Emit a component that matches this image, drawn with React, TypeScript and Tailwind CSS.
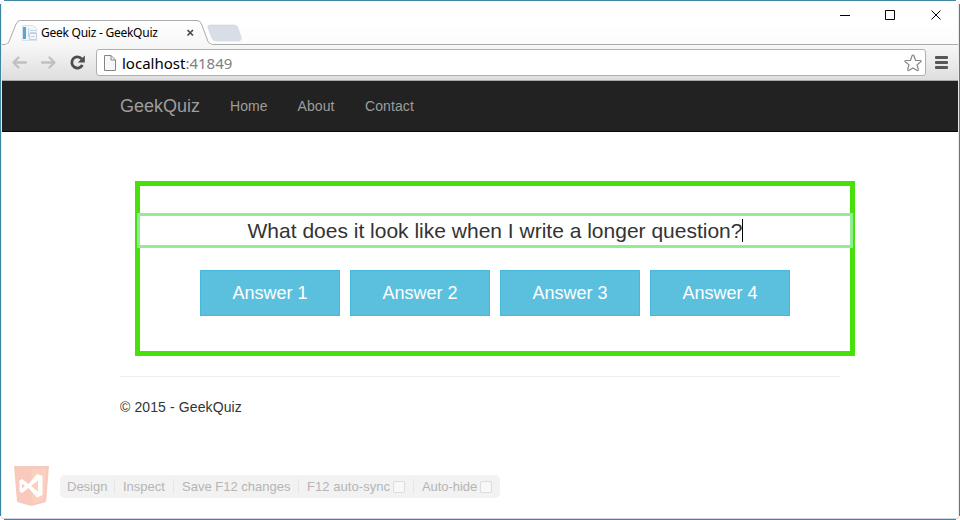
import React from "react";

function TabStrip() {
  return (
    <div className="flex h-11 shrink-0 justify-between bg-gradient-to-b from-white from-50% to-[#fbfbfb]">
      <div className="relative mt-[18px] h-[26px] w-[250px]">
        <svg className="absolute inset-0" width="250" height="26" viewBox="0 0 250 26" fill="none">
          <defs>
            <linearGradient id="tab" x1="0" y1="0" x2="0" y2="1">
              <stop offset="0" stopColor="#fff" />
              <stop offset="1" stopColor="#f7f7f7" />
            </linearGradient>
          </defs>
          <path d="M0 25.5H3Q6 25.5 7 22.5L14 5Q15.5 1.5 18.5 1.5H195Q198 1.5 199.500 5L206 22.500Q207.500 25.500 210.500 25.500H250" fill="url(#tab)" stroke="#ababab" />
          <path d="M4 25.5H209" stroke="#f7f7f7" />
          <path d="M208 6h24q3 0 4 3l3 9q1 4-3 4h-21q-4 0-5-3l-4-10q-1-3 2-3z" fill="#d8dee7" stroke="#d0d3d8" strokeWidth=".6" />
          <path d="M20.500 6.500h11l3 3V21.500h-14z" fill="#f1f6fb" stroke="#d9e1e9" />
          <path d="M21 8h3v12h-3z" fill="#5ba5d6" />
          <path d="M26.500 9v9M28 11.500h6M28 13.500h6" stroke="#c5d7e6" />
          <path d="M27.500 14.500h7v6h-7z" fill="#f5f6fa" stroke="#c8cedb" />
          <path d="M29 17.500h4" stroke="#c8cedb" />
          <path d="m185.500 11 5.500 5.500m0-5.500-5.500 5.500" stroke="#4a4a4a" strokeWidth="1.700" />
        </svg>
        <span className="absolute left-[39px] top-[6px] whitespace-nowrap text-[12px] leading-4 tracking-[-0.250px] text-black">Geek Quiz - GeekQuiz</span>
      </div>
      <div className="flex grow flex-col justify-between">
        <svg className="mr-[15px] mt-[8px] self-end" width="104" height="12" viewBox="0 0 104 12" fill="none" stroke="#000">
          <path d="M1 6.500h10M46.500 1.500h9v9h-9zM92.500 1.500l9 9m0-9-9 9" />
        </svg>
        <div className="h-px bg-[#ababab]" />
      </div>
    </div>
  );
}

function Toolbar() {
  return (
    <div className="flex h-9 shrink-0 items-center border-b border-[#a8a8a8] bg-gradient-to-b from-[#f7f7f7] to-[#dedede]">
      <svg width="94" height="36" viewBox="0 0 94 36" fill="none">
        <g stroke="#c0c0c0" strokeWidth="2.300" strokeLinecap="round" strokeLinejoin="round">
          <path d="M24 17.500H11.500m5-5-5 5 5 5M40 17.500h12.500m-5-5 5 5-5 5" />
        </g>
        <path d="M79.700 13.800A5.600 5.600 0 1 0 80.400 20" stroke="#4d4d4d" strokeWidth="2.800" />
        <path d="M82.800 10.500v7h-7z" fill="#4d4d4d" />
      </svg>
      <div className="flex h-[27px] w-[830px] items-center rounded-[3px] border border-[#b0b0b0] bg-white">
        <svg className="ml-[7px]" width="12" height="16" viewBox="0 0 12 16" fill="#f7f7f7" stroke="#858585">
          <path d="M.5.5H7L11.500 5V15.500H.5zM7 .5V5h4.500" />
        </svg>
        <span className="ml-[6px] grow text-[15px] leading-5 text-[#808080]"><span className="text-black">localhost</span>:41849</span>
        <svg className="mr-[3px]" width="18" height="18" viewBox="0 0 18 18" fill="none" stroke="#858585" strokeWidth="1.200" strokeLinejoin="round">
          <path d="M9 1Q9.800 1 10 2L11.500 6.300 16 6.500Q18 6.700 16.500 8L13 10.900 14.200 15Q14.500 17.200 12.800 16.300L9 13.900 5.200 16.300Q3.500 17.200 3.800 15L5 10.900 1.500 8Q0 6.700 2 6.500L6.500 6.300 8 2Q8.200 1 9 1z" />
        </svg>
      </div>
      <div className="ml-[9px] flex w-[13px] flex-col gap-[2px]">
        <div className="h-[3px] rounded-[1px] bg-[#575757]" />
        <div className="h-[3px] rounded-[1px] bg-[#575757]" />
        <div className="h-[3px] rounded-[1px] bg-[#575757]" />
      </div>
    </div>
  );
}

function NavBar() {
  return (
    <nav className="flex h-[51px] shrink-0 items-center border-b border-[#080808] bg-[#222] pl-[118px] text-[14px] leading-5 text-[#9d9d9d]">
      <span className="w-[110px] text-[18px]">GeekQuiz</span>
      <span className="w-[67.500px] tracking-[0.100px]">Home</span>
      <span className="w-[67.500px] tracking-[0.100px]">About</span>
      <span className="tracking-[0.100px]">Contact</span>
    </nav>
  );
}

function Quiz() {
  return (
    <section className="ml-[133px] mt-[49px] h-[175px] w-[720px] shrink-0 border-[5px] border-[#47e00a] pt-[27px]">
      <div className="-mx-[3px] flex h-[35px] items-center justify-center border-[3px] border-[#90ee90] pl-px text-[21px] leading-[23px] text-[#333]">
        <span className="whitespace-nowrap">What does it look like when I write a longer question?</span>
        <span className="h-[23px] w-px bg-black" />
      </div>
      <div className="mt-[22px] flex justify-center gap-[10px]">
        {[1, 2, 3, 4].map((n) => (
          <button key={n} className="h-[46px] w-[140px] border border-[#46b8da] bg-[#5bc0de] text-[18px] leading-6 text-white">Answer {n}</button>
        ))}
      </div>
    </section>
  );
}

function Check() {
  return <span className="ml-[3px] h-3 w-3 rounded-[2px] border border-[#dcdcdc] bg-[#f8f8f8]" />;
}

function BrowserLink() {
  return (
    <div className="mb-[11px] ml-3 mt-auto flex h-[41px] items-center">
      <svg width="36" height="41" viewBox="0 0 36 41">
        <path d="M0 0h35l-3 36-14.500 4L3 36z" fill="#f7cabd" />
        <path d="M17.500 3H32l-2.500 31-12 3.500z" fill="#fbd0bc" />
        <path fillRule="evenodd" d="M5.500 14.500l2.500-1.500 6.500 5L23 8l5.500 2v19L23 31.500 14.500 22 8 27l-2.500-1.500zM8 17.500v5l3-2.500zM17 20l7 5.500V14.500z" fill="#fff" />
      </svg>
      <div className="ml-[10px] flex h-[23px] w-[440px] items-center rounded-[5px] bg-[#f2f2f2] text-[13px] leading-4 text-[#b5b5b5]">
        <span className="ml-[7px] w-[47px]">Design</span>
        <span className="h-[15px] w-px bg-[#e6e6e6]" />
        <span className="ml-2 w-[50px]">Inspect</span>
        <span className="h-[15px] w-px bg-[#e6e6e6]" />
        <span className="ml-2 w-[116px] whitespace-nowrap">Save F12 changes</span>
        <span className="h-[15px] w-px bg-[#e6e6e6]" />
        <span className="ml-2 flex w-[106px] items-center whitespace-nowrap tracking-[0.060px]">F12 auto-sync<Check /></span>
        <span className="h-[15px] w-px bg-[#e6e6e6]" />
        <span className="ml-2 flex items-center whitespace-nowrap tracking-[-0.060px]">Auto-hide<Check /></span>
      </div>
    </div>
  );
}

export default function App() {
  return (
    <div className="flex h-[520px] w-[960px] flex-col overflow-hidden bg-white font-['Liberation_Sans',Arial,sans-serif]">
      <div className="mx-1 h-px shrink-0 bg-[#3f86a6]" />
      <div className="flex h-[518px] shrink-0">
        <div className="my-[3px] w-px bg-[#3f86a6]" />
        <main className="flex w-[958px] flex-col rounded-b-[2px] border-x border-b border-x-[#e8eaeb] border-b-[#d5d5d5]">
          <div className="font-['Noto_Sans','Open_Sans',sans-serif]">
            <TabStrip />
            <Toolbar />
          </div>
          <NavBar />
          <Quiz />
          <hr className="ml-[118px] mt-5 w-[720px] border-[#eee]" />
          <footer className="ml-[118px] mt-5 text-[14px] leading-5 tracking-[0.110px] text-[#333]">© 2015 - GeekQuiz</footer>
          <BrowserLink />
        </main>
        <div className="my-[3px] w-px bg-[#3f86a6]" />
      </div>
      <div className="mx-1 h-px shrink-0 bg-[#3f86a6]" />
    </div>
  );
}
